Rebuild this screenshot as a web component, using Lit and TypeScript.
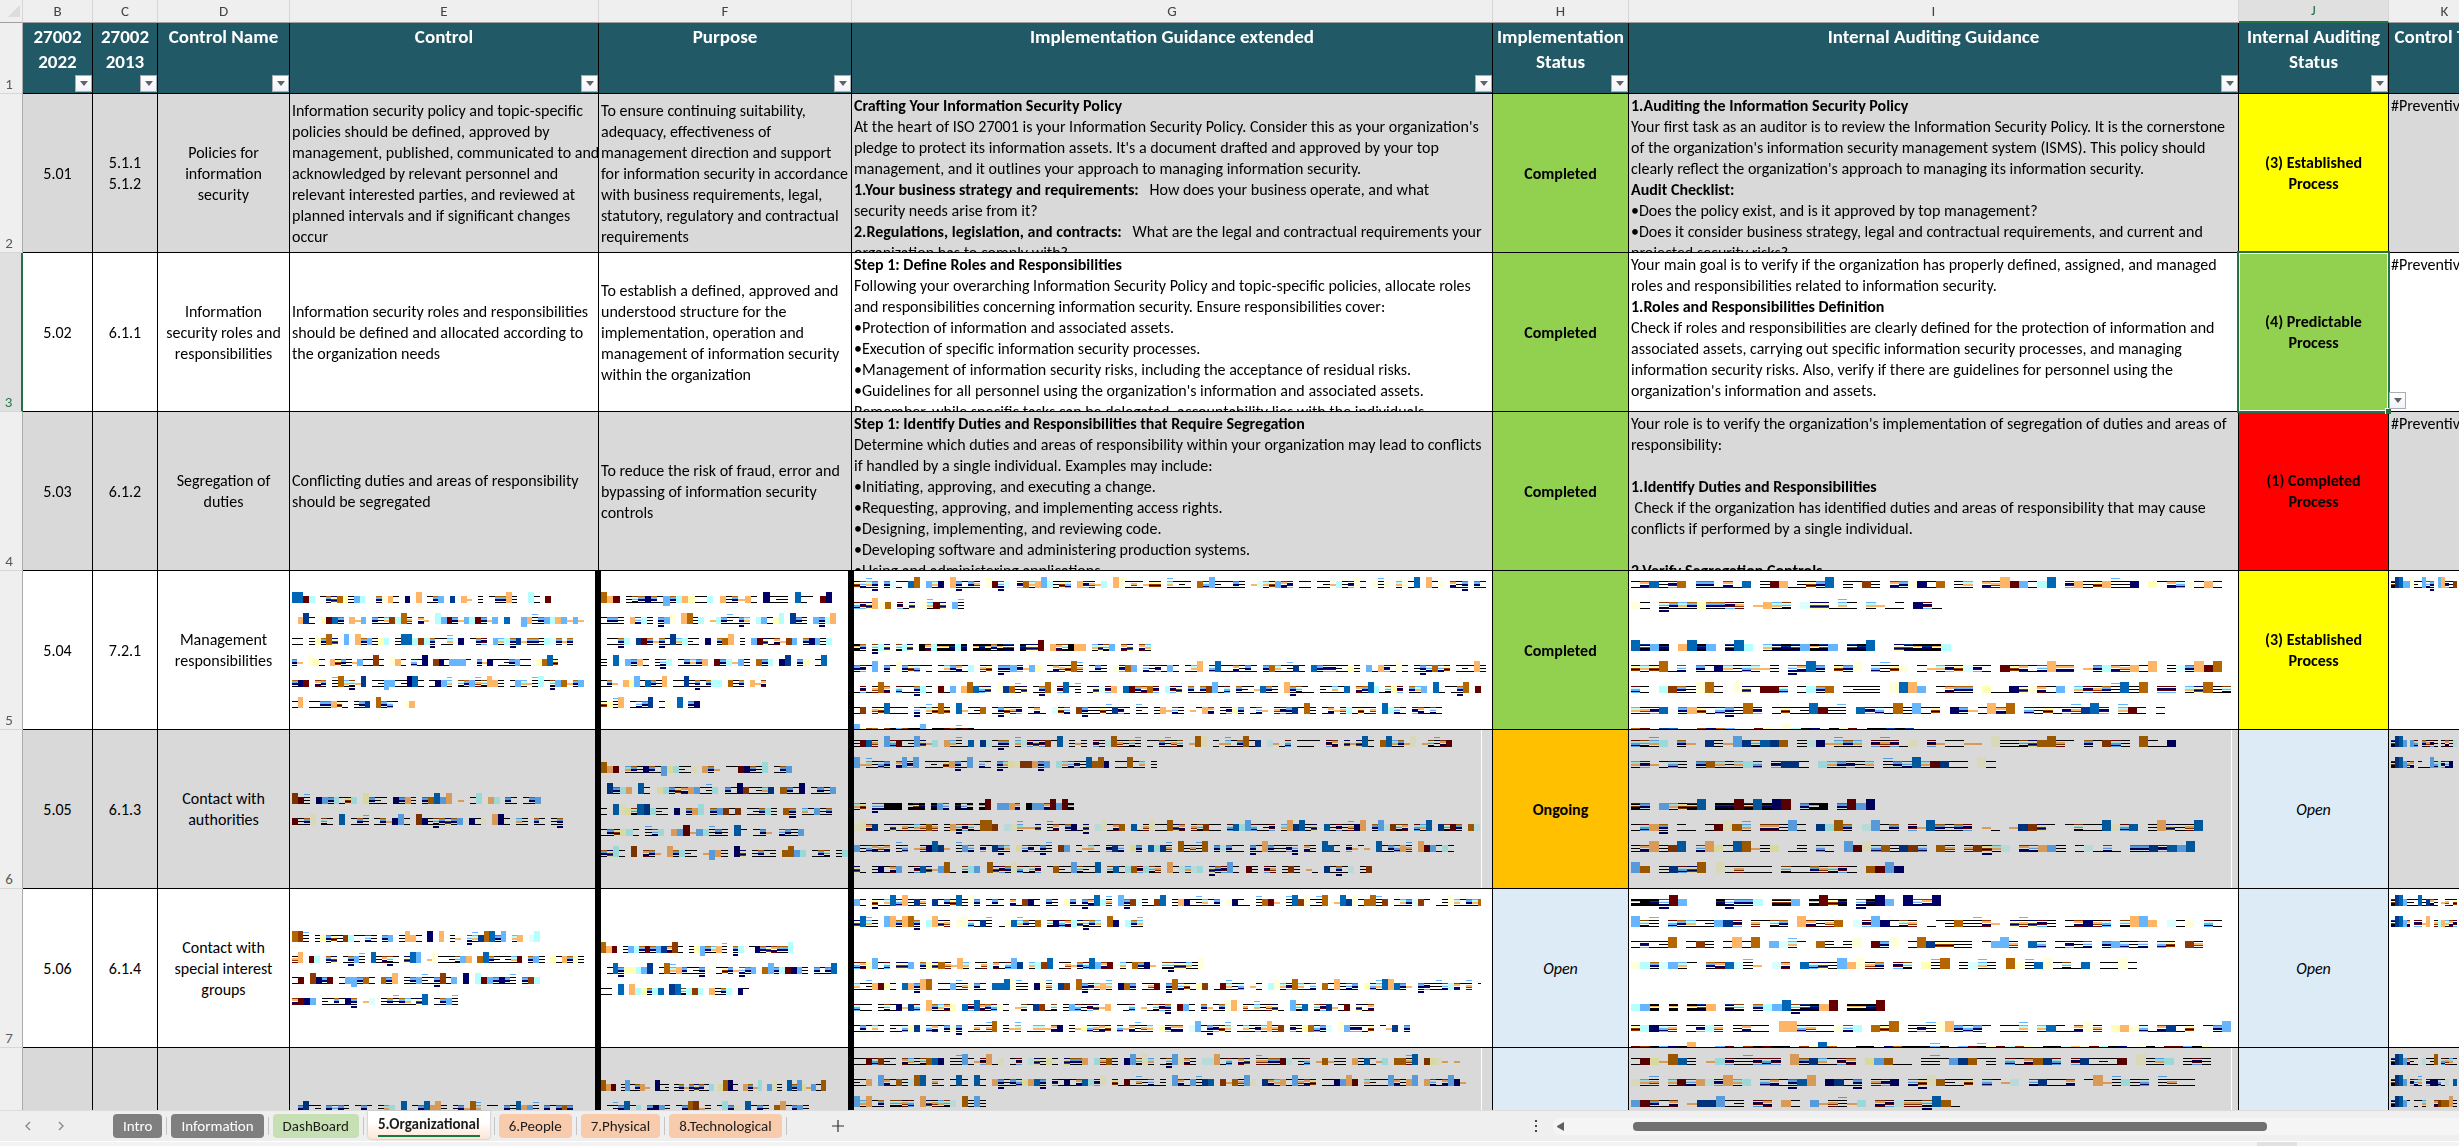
import { LitElement, html, svg, css, nothing } from "lit";
import { customElement, property } from "lit/decorators.js";
import { classMap } from "lit/directives/class-map.js";
import { styleMap } from "lit/directives/style-map.js";

/* ---------- striped block lines ---------- */

const SOLID: Record<string, string> = {
  n: "#000066", r: "#660000", w: "#903a00", g: "#b66600", p: "#ffb566",
  s: "#66b5ff", b: "#0066b6", d: "#003a90", c: "#b6ffff", y: "#ffffb6",
  i: "#ffffdb", l: "#dbffff", k: "#000000",
};

// Seven stripes from x-height to baseline; "." leaves a stripe clear.
const STRIPES: Record<string, string> = {
  o: "k.....k", e: "k..k..k", t: "k......", u: "......k",
  m: "...pp..", q: "wpp.nnr", x: "gssnnlk", z: "rlcssns",
  v: "nyywnwy", j: "r.nnr.s", f: "k.ppw.r", h: "sccpp.k",
  a: "w.cs.nk", K: "kkdnnkk", X: "kkp.kkk", Z: "dk.wkkn",
};

const TALL = "NRWGPSBDCYIL";

function pick(pool: string, random: () => number) {
  return pool[Math.floor(random() * pool.length)];
}

function sequence(cells: number, seed: number, bold: boolean) {
  let state = seed * 7919 + 17;
  const random = () => {
    state = (state * 1103515245 + 12345) & 0x7fffffff;
    return ((state >> 8) & 0xffff) / 65536;
  };
  const pool = bold
    ? "KXZKXZKXxakNRBcpsqhv "
    : "oeoeoetuooeaxzvjfhqmaxzhjfqvnrgpsbdcyilwmxoeGPBSI";
  let out = "";
  let word = 2 + Math.floor(random() * 6);
  while (out.length < cells) {
    if (word-- <= 0) {
      out += " ";
      word = 2 + Math.floor(random() * 8);
    } else {
      out += pick(pool, random);
    }
  }
  return out;
}

function drawBlock(ch: string, x: number) {
  const rect = (y: number, h: number, color: string) =>
    svg`<rect x=${x} y=${y} width="1" height=${h} fill=${color}></rect>`;
  if (ch === " ") return nothing;
  if (TALL.includes(ch)) return rect(5, 11, SOLID[ch.toLowerCase()]);
  if (ch === "Q") return rect(9, 10, SOLID.s);
  if (SOLID[ch]) return rect(9, 7, SOLID[ch]);
  const stripes = STRIPES[ch] ?? "";
  const tail = x % 7 === 3 && "vxa".includes(ch) ? rect(17, 2, SOLID.n) : nothing;
  const cap = x % 5 === 2 && "hfe".includes(ch) ? rect(6, 1, SOLID.s) : nothing;
  return [
    ...[...stripes].map((s, i) => (s === "." ? nothing : rect(9 + i, 1, SOLID[s]))),
    tail,
    cap,
  ];
}

type Noise = { pattern: string; width: number };

const E = (width: number, pattern: string): Noise => ({ pattern, width });

let seed = 1;
const run = (widths: number[], unit: number): Noise[] =>
  widths.map((w) => {
    const width = Math.abs(w);
    return { pattern: width ? sequence(Math.round(width / unit), seed++, w < 0) : "", width };
  });
const wide = (...widths: number[]) => run(widths, 6);
const audit = (...widths: number[]) => run(widths, 9.3);
const tags = (...widths: number[]): Noise[] =>
  run(widths, 4).map((n) => ({ ...n, pattern: "ZDBs" + n.pattern.slice(4) }));

/* ---------- sheet data ---------- */

type Cell = string[] | Noise[];
interface Row {
  no: number;
  id: string;
  old: string[];
  name: string[];
  control: Cell;
  purpose: Cell;
  guidance: Cell;
  status: string;
  auditing: Cell;
  result: string[];
  tone: string;
  type: Cell;
}

const ROWS: Row[] = [
  {
    no: 2, id: "5.01", old: ["5.1.1", "5.1.2"],
    name: ["Policies for", "information", "security"],
    control: [
      "Information security policy and topic-specific",
      "policies should be defined, approved by",
      "management, published, communicated to and",
      "acknowledged by relevant personnel and",
      "relevant interested parties, and reviewed at",
      "planned intervals and if significant changes",
      "occur",
    ],
    purpose: [
      "To ensure continuing suitability,",
      "adequacy, effectiveness of",
      "management direction and support",
      "for information security in accordance",
      "with business requirements, legal,",
      "statutory, regulatory and contractual",
      "requirements",
    ],
    guidance: [
      "**Crafting Your Information Security Policy",
      "At the heart of ISO 27001 is your Information Security Policy. Consider this as your organization's",
      "pledge to protect its information assets. It's a document drafted and approved by your top",
      "management, and it outlines your approach to managing information security.",
      "**1.Your business strategy and requirements:**   How does your business operate, and what",
      "security needs arise from it?",
      "**2.Regulations, legislation, and contracts:**   What are the legal and contractual requirements your",
      "organization has to comply with?",
    ],
    status: "Completed",
    auditing: [
      "**1.Auditing the Information Security Policy",
      "Your first task as an auditor is to review the Information Security Policy. It is the cornerstone",
      "of the organization's information security management system (ISMS). This policy should",
      "clearly reflect the organization's approach to managing its information security.",
      "**Audit Checklist:",
      "•Does the policy exist, and is it approved by top management?",
      "•Does it consider business strategy, legal and contractual requirements, and current and",
      "projected security risks?",
    ],
    result: ["(3) Established", "Process"], tone: "yellow", type: ["#Preventive"],
  },
  {
    no: 3, id: "5.02", old: ["6.1.1"],
    name: ["Information", "security roles and", "responsibilities"],
    control: [
      "Information security roles and responsibilities",
      "should be defined and allocated according to",
      "the organization needs",
    ],
    purpose: [
      "To establish a defined, approved and",
      "understood structure for the",
      "implementation, operation and",
      "management of information security",
      "within the organization",
    ],
    guidance: [
      "**Step 1: Define Roles and Responsibilities",
      "Following your overarching Information Security Policy and topic-specific policies, allocate roles",
      "and responsibilities concerning information security. Ensure responsibilities cover:",
      "•Protection of information and associated assets.",
      "•Execution of specific information security processes.",
      "•Management of information security risks, including the acceptance of residual risks.",
      "•Guidelines for all personnel using the organization's information and associated assets.",
      "Remember, while specific tasks can be delegated, accountability lies with the individuals",
    ],
    status: "Completed",
    auditing: [
      "Your main goal is to verify if the organization has properly defined, assigned, and managed",
      "roles and responsibilities related to information security.",
      "**1.Roles and Responsibilities Definition",
      "Check if roles and responsibilities are clearly defined for the protection of information and",
      "associated assets, carrying out specific information security processes, and managing",
      "information security risks. Also, verify if there are guidelines for personnel using the",
      "organization's information and assets.",
    ],
    result: ["(4) Predictable", "Process"], tone: "green", type: ["#Preventive"],
  },
  {
    no: 4, id: "5.03", old: ["6.1.2"],
    name: ["Segregation of", "duties"],
    control: ["Conflicting duties and areas of responsibility", "should be segregated"],
    purpose: [
      "To reduce the risk of fraud, error and",
      "bypassing of information security",
      "controls",
    ],
    guidance: [
      "**Step 1: Identify Duties and Responsibilities that Require Segregation",
      "Determine which duties and areas of responsibility within your organization may lead to conflicts",
      "if handled by a single individual. Examples may include:",
      "•Initiating, approving, and executing a change.",
      "•Requesting, approving, and implementing access rights.",
      "•Designing, implementing, and reviewing code.",
      "•Developing software and administering production systems.",
      "•Using and administering applications.",
    ],
    status: "Completed",
    auditing: [
      "Your role is to verify the organization's implementation of segregation of duties and areas of",
      "responsibility:",
      "",
      "**1.Identify Duties and Responsibilities",
      " Check if the organization has identified duties and areas of responsibility that may cause",
      "conflicts if performed by a single individual.",
      "",
      "**2.Verify Segregation Controls",
    ],
    result: ["(1) Completed", "Process"], tone: "red", type: ["#Preventive"],
  },
  {
    no: 5, id: "5.04", old: ["7.2.1"],
    name: ["Management", "responsibilities"],
    control: [
      E(259, "BBrc txvgyesc  xipo n P oxs d pm e txxPe  Co r"),
      E(292, " pDo yrbx pms xehwcGf qm Csrxmscrxms b  Qpexscpsmsm"),
      E(281, "oo eyxGv S Pxseyc eBBcwcxtoh n txj shcxdmxxeclxmx"),
      E(266, "xm Iyo pvxemsooWo Ipo zoN wnossst xmntoexsoo ygBv"),
      E(292, "xnr qx eGhamD oeQsoeNBo onsh axsfaPpe oshmeCtasgmxs"),
      E(123, "oP ooxxpvo exd Gxzt ip"),
    ],
    purpose: [
      E(231, "Gpr eaxnxoQxcpyooc pexmpo Noee Bot rN"),
      E(235, "oxxe pace xsI PGec mcxeoxh csoyC Dxe sxcP"),
      E(231, " ooxc drxmxoDhceo n xgP e srvoqmws xnsec"),
      E(226, "e B sxpo eac oxhxp rxcmse gxc nD xy oB"),
      E(165, "oxm pySobxeP ooDexoxcc gex pmq"),
      E(99, "vyeP oaxD oi B xn"),
    ],
    guidance: wide(632, 110, 0, -297, 632, 627, 588, 126),
    status: "Completed",
    auditing: audit(591, 320, 0, -329, 591, 600, 534, 283),
    result: ["(3) Established", "Process"], tone: "yellow", type: tags(66),
  },
  {
    no: 6, id: "5.05", old: ["6.1.3"],
    name: ["Contact with", "authorities"],
    control: [
      E(249, "Wre nsxcovc Yxeo nxpe xgBsP m oC pc xo oxs"),
      E(271, "rexI ao B oxe oxmnSo Wneaxvxs noi PNo he xo ex"),
    ],
    purpose: [
      E(191, "Gpr hxenxoQyceoi pxm ttrnxeC oxs"),
      E(235, " Dxcp Bo ycxvqpsoec xoNwoehd gxoN oxes"),
      E(231, "o BIyaBDceo n xpC xswow oexce gx hosex"),
      E(203, "oxvyco eac psRmscexe Bt oxm axes"),
      E(247, "xvCo W qxm Pxceo mQpe Nv exoe gGsc oxa ec"),
    ],
    guidance: wide(598, 303, 0, -220, 626, 606, 518),
    status: "Ongoing",
    auditing: audit(545, 374, 0, -244, 572, 564, 282),
    result: ["Open"], tone: "open", type: tags(66, 66),
  },
  {
    no: 7, id: "5.06", old: ["6.1.4"],
    name: ["Contact with", "special interest", "groups"],
    control: [
      E(248, "GWe eyxvewcotae xs ePpo N P em ahdGBxS hp lC"),
      E(292, "fP rc xv oxse Beqao vBS mIooeasp gBxeoehr xse yopxye"),
      E(248, "or Wnxr osQxgo gxP exseoxWos N Crsxnxe xwc"),
      E(166, "qrns eoxonx ml exexhovB oxse"),
    ],
    purpose: [
      E(192, "Gpr escxrxsdqWo eyQxhpe xc tnxvqxxC"),
      E(236, " oBxyycsD oGhpxoexi ovxmaxs gSxcrnse xoxB"),
      E(148, "oo B Pcyxcb DBacwc pexc nt"),
    ],
    guidance: wide(630, 289, 0, 350, 630, 520, 556),
    status: "Open",
    auditing: audit(-310, 591, 572, 506, 0, -254, 600, 580),
    result: ["Open"], tone: "open", type: tags(66, 66),
  },
  {
    no: 8, id: "", old: [],
    name: [],
    control: [
      E(281, " xDoe xaxe oxt ehc B oxBpPe exmGh oo xeBpse xoxgx"),
      E(110, "oexg nxmc soxBe oxm"),
      E(50, "oexg nxmc"),
    ],
    purpose: [
      E(225, "Gpr eSoxpm Noe exmxvxoc yGNo pxmC sIe BxSymsoG"),
      E(208, " oexBoc xnse oxGWme oCxi Boxe gPoxse"),
      E(50, "oexg nxmc"), E(50, "oexg nxmc"), E(50, "oexg nxmc"),
    ],
    guidance: wide(606, 612, 132),
    status: "",
    auditing: audit(580, 564, 329),
    result: [], tone: "open", type: tags(66, 66, 66),
  },
];

interface Column { letter: string; key: string; title: string[] }
const COLUMNS: Column[] = [
  { letter: "B", key: "b", title: ["27002", "2022"] },
  { letter: "C", key: "c", title: ["27002", "2013"] },
  { letter: "D", key: "d", title: ["Control Name"] },
  { letter: "E", key: "e", title: ["Control"] },
  { letter: "F", key: "f", title: ["Purpose"] },
  { letter: "G", key: "g", title: ["Implementation Guidance extended"] },
  { letter: "H", key: "h", title: ["Implementation", "Status"] },
  { letter: "I", key: "i", title: ["Internal Auditing Guidance"] },
  { letter: "J", key: "j", title: ["Internal Auditing", "Status"] },
  { letter: "K", key: "k", title: ["Control Type"] },
];

const arrow = html`<svg viewBox="0 0 8 5" width="8" height="5" aria-hidden="true">
  <path d="M0 0h8L4 5z" fill="#5f6368"></path>
</svg>`;

/* ---------- elements ---------- */

@customElement("cell-lines")
class CellLines extends LitElement {
  @property({ attribute: false }) lines: Cell = [];

  static styles = css`
    :host { display: block; }
    .line { height: 21px; line-height: 21px; white-space: pre; }
    .line svg { display: block; mix-blend-mode: multiply; }
    b { font-weight: 700; }
  `;

  private text(line: string) {
    return line.split("**").map((part, i) => (i % 2 ? html`<b>${part}</b>` : part));
  }

  private noise(line: Noise) {
    if (!line.pattern) return nothing;
    return html`<svg
      width=${line.width}
      height="21"
      viewBox="0 0 ${line.pattern.length} 21"
      preserveAspectRatio="none"
      shape-rendering="crispEdges"
      aria-hidden="true"
    >${[...line.pattern].map((ch, x) => drawBlock(ch, x))}</svg>`;
  }

  render() {
    return (this.lines as (string | Noise)[]).map(
      (line) => html`<div class="line">${typeof line === "string" ? this.text(line) : this.noise(line)}</div>`,
    );
  }
}

@customElement("sheet-grid")
class SheetGrid extends LitElement {
  static styles = css`
    :host { display: block; --green: #217346; --line: #000; }
    table { table-layout: fixed; border-collapse: separate; border-spacing: 0; width: 0; }
    th, td { padding: 0; box-sizing: border-box; position: relative; font-weight: 400; }
    .no { width: 23px; }
    .b { width: 70px; } .c { width: 65px; } .d { width: 132px; } .e { width: 309px; }
    .f { width: 253px; } .g { width: 641px; } .h { width: 136px; } .i { width: 610px; }
    .j { width: 150px; } .k { width: 112px; }

    .letters th {
      height: 23px; line-height: 21px; font-size: 15px; color: #444;
      background: #efefef; border-right: 1px solid #d6d6d6; border-bottom: 1px solid #9f9f9f;
    }
    .letters .active { background: #e0e0e0; color: var(--green); border-bottom: 2px solid var(--green); }
    .corner svg { display: block; margin: 0 0 0 8px; }
    .row-no {
      background: #efefef; color: #5a5a5a; font-size: 15px; line-height: 18px; vertical-align: bottom;
      text-align: center; border-right: 1px solid #ababab; border-bottom: 1px solid #d6d6d6;
    }
    .row-no div { padding-right: 4px; }
    .row-no.active { background: #e0e0e0; color: var(--green); border-right: 2px solid var(--green); }

    .titles th {
      height: 71px; background: #225966; color: #fff; font-size: 19px; font-weight: 700; line-height: 25px;
      vertical-align: top; padding-top: 1px; white-space: nowrap;
      border-right: 1px solid var(--line); border-bottom: 1px solid var(--line);
    }
    .titles .row-no {
      background: #efefef; color: #5a5a5a; font-size: 15px; font-weight: 400; line-height: 18px;
      vertical-align: bottom; border-right: 1px solid #ababab; border-bottom: 1px solid #d6d6d6;
    }
    button {
      width: 17px; height: 17px; padding: 0; display: grid; place-items: center;
      background: linear-gradient(#fff, #f1f3f7); border: 1px solid #a9adb5;
    }
    .filter { position: absolute; right: 0; bottom: 1px; }

    .box {
      height: 158px; overflow: hidden; display: flex; align-items: center;
      justify-content: center; text-align: center;
    }
    tbody td { border-right: 1px solid var(--line); border-bottom: 1px solid var(--line); background: #fff; }
    .shade td { background: #d9d9d9; }
    .left .box { justify-content: flex-start; text-align: left; padding-left: 2px; }
    .top .box { align-items: flex-start; padding-top: 1px; box-sizing: border-box; }
    .bars .e, .bars .f { border-right: 4px solid #000; }
    .bars .f, .bars .g { border-left: 2px solid #000; }
    .bars .f .box, .bars .g .box { padding-left: 0; }
    .edge .box { margin-right: 10px; border-right: 1px solid #fff; }
    .i.edge .box { margin-right: 6px; }

    tbody td.green { background: #92d050; font-weight: 700; }
    tbody td.amber { background: #ffc000; font-weight: 700; }
    tbody td.yellow { background: #ffff00; font-weight: 700; }
    tbody td.red { background: #ff0000; font-weight: 700; }
    tbody td.open { background: #ddebf7; font-style: italic; }

    .selection {
      position: absolute; z-index: 1; inset: -2px; pointer-events: none;
      border: 2px solid var(--green); box-shadow: inset 0 0 0 1px #fff;
    }
    .handle {
      position: absolute; right: -3px; bottom: -3px; width: 5px; height: 5px;
      background: var(--green); border: 1px solid #fff; border-width: 1px 0 0 1px;
    }
    .picker { position: absolute; z-index: 2; left: 100%; bottom: 2px; margin-left: 1px; }
  `;

  private box(lines: Cell) {
    return html`<div class="box"><cell-lines .lines=${lines}></cell-lines></div>`;
  }

  private row(row: Row) {
    const shade = row.no % 2 === 0;
    const noisy = row.no > 4;
    const edge = row.no > 5;
    const tone = { Completed: "green", Ongoing: "amber" }[row.status] ?? "open";
    const selected = row.no === 3;
    return html`<tr class=${classMap({ shade, bars: noisy })}>
      <th scope="row" class=${classMap({ "row-no": true, active: selected })}><div>${row.no}</div></th>
      <td>${this.box([row.id])}</td>
      <td>${this.box(row.old)}</td>
      <td>${this.box(row.name)}</td>
      <td class="e left">${this.box(row.control)}</td>
      <td class="f left">${this.box(row.purpose)}</td>
      <td class=${classMap({ g: true, left: true, top: true, edge })}>${this.box(row.guidance)}</td>
      <td class=${tone}>${this.box([row.status])}</td>
      <td class=${classMap({ i: true, left: true, top: true, edge })}>${this.box(row.auditing)}</td>
      <td class=${row.tone}>
        ${this.box(row.result)}
        ${selected
          ? html`<div class="selection"><span class="handle"></span></div>
              <button class="picker" aria-label="Choose status">${arrow}</button>`
          : nothing}
      </td>
      <td class="left top">${this.box(row.type)}</td>
    </tr>`;
  }

  render() {
    return html`<table>
      <colgroup>
        <col class="no" />
        ${COLUMNS.map((c) => html`<col class=${c.key} />`)}
      </colgroup>
      <thead>
        <tr class="letters">
          <th class="corner">
            <svg viewBox="0 0 12 12" width="12" height="12" aria-hidden="true"><path d="M12 0v12H0z" fill="#dcdcdc"></path></svg>
          </th>
          ${COLUMNS.map((c) => html`<th scope="col" class=${classMap({ active: c.letter === "J" })}>${c.letter}</th>`)}
        </tr>
        <tr class="titles">
          <th class="row-no"><div>1</div></th>
          ${COLUMNS.map(
            (c) => html`<th scope="col">
              ${c.title.map((t) => html`<div>${t}</div>`)}
              <button class="filter" aria-label="Filter ${c.title.join(" ")}">${arrow}</button>
            </th>`,
          )}
        </tr>
      </thead>
      <tbody>${ROWS.map((r) => this.row(r))}</tbody>
    </table>`;
  }
}

@customElement("sheet-tabs")
class SheetTabs extends LitElement {
  static styles = css`
    :host {
      display: flex; height: 32px; background: #efefef; border-top: 1px solid #dcdcdc;
      box-sizing: border-box; border-bottom: 1px solid #fff; font-size: 15px;
    }
    button { font: inherit; border: 0; background: none; padding: 0; color: inherit; }
    .left { flex: 0 0 1530px; display: flex; align-items: center; }
    .nav { display: flex; gap: 21px; padding: 0 46px 0 22px; }
    .nav button, .add { display: grid; place-items: center; width: 12px; height: 24px; }
    .tabs { display: flex; align-self: stretch; align-items: center; }
    .item { display: flex; align-items: center; align-self: stretch; }
    .item::after { content: ""; width: 1px; height: 18px; margin: 0 4px; background: #c4c4c4; }
    .tab { height: 24px; padding: 0 10px; border-radius: 4px; line-height: 24px; color: #1c1c1c; }
    .gray { background: #7f7f7f; color: #fff; }
    .green { background: #c6e0b4; }
    .peach { background: #f8cbad; }
    .current {
      align-self: flex-start; height: 28px; font-weight: 700; border-radius: 0 0 4px 4px;
      background: linear-gradient(#fff 40%, #fde4d4); box-shadow: 0 0 2px #999;
    }
    .current span { display: block; line-height: 22px; border-bottom: 2px solid #107c41; }
    .add { margin-left: 41px; }
    .scroll { flex: 1; display: flex; align-items: center; }
    .dots { display: grid; gap: 3px; width: 12px; justify-items: center; margin-right: 11px; }
    .dots i { width: 2px; height: 2px; background: #444; }
    .track {
      flex: 1; display: flex; align-items: center; height: 17px;
      background: #f5f5f5; border-radius: 8px 0 0 8px;
    }
    .track button { width: 14px; height: 17px; display: grid; place-items: center; }
    .rail { flex: 1; display: flex; padding-left: 66px; }
    .thumb { height: 9px; border-radius: 4px; background: #707070; }
  `;

  private tabs = [
    ["Intro", "gray"], ["Information", "gray"], ["DashBoard", "green"], ["5.Organizational", "current"],
    ["6.People", "peach"], ["7.Physical", "peach"], ["8.Technological", "peach"],
  ];

  render() {
    return html`
      <div class="left">
        <div class="nav">
          <button aria-label="Previous sheet"><svg width="8" height="10" viewBox="0 0 8 10"><path d="M6 1 2 5l4 4" fill="none" stroke="#8a8a8a" stroke-width="1.4"></path></svg></button>
          <button aria-label="Next sheet"><svg width="8" height="10" viewBox="0 0 8 10"><path d="m2 1 4 4-4 4" fill="none" stroke="#8a8a8a" stroke-width="1.4"></path></svg></button>
        </div>
        <div class="tabs">
          ${this.tabs.map(([name, tone]) => html`<div class="item"><button class="tab ${tone}"><span>${name}</span></button></div>`)}
        </div>
        <button class="add" aria-label="New sheet"><svg width="12" height="12" viewBox="0 0 12 12"><path d="M6 0v12M0 6h12" stroke="#333" stroke-width="1.2"></path></svg></button>
      </div>
      <div class="scroll">
        <div class="dots"><i></i><i></i><i></i></div>
        <div class="track">
          <button aria-label="Scroll left"><svg width="7" height="9" viewBox="0 0 7 9"><path d="M7 0v9L0 5V4z" fill="#606060"></path></svg></button>
          <div class="rail"><div class="thumb" style=${styleMap({ width: "76.8%" })}></div></div>
        </div>
      </div>
    `;
  }
}

@customElement("app-root")
class AppRoot extends LitElement {
  static styles = css`
    :host {
      display: flex; flex-direction: column; height: 100vh; overflow: hidden; background: #fff;
      font-family: Carlito, Lato, "Open Sans", sans-serif; font-size: 16px; color: #000;
    }
    sheet-grid { flex: 1; min-height: 0; overflow: hidden; }
    .status { height: 4px; background: #f3f3f3; display: flex; justify-content: flex-end; }
    .status span { width: 40px; margin-right: 162px; background: #e1e1e1; }
  `;

  render() {
    return html`<sheet-grid></sheet-grid><sheet-tabs></sheet-tabs><div class="status"><span></span></div>`;
  }
}
